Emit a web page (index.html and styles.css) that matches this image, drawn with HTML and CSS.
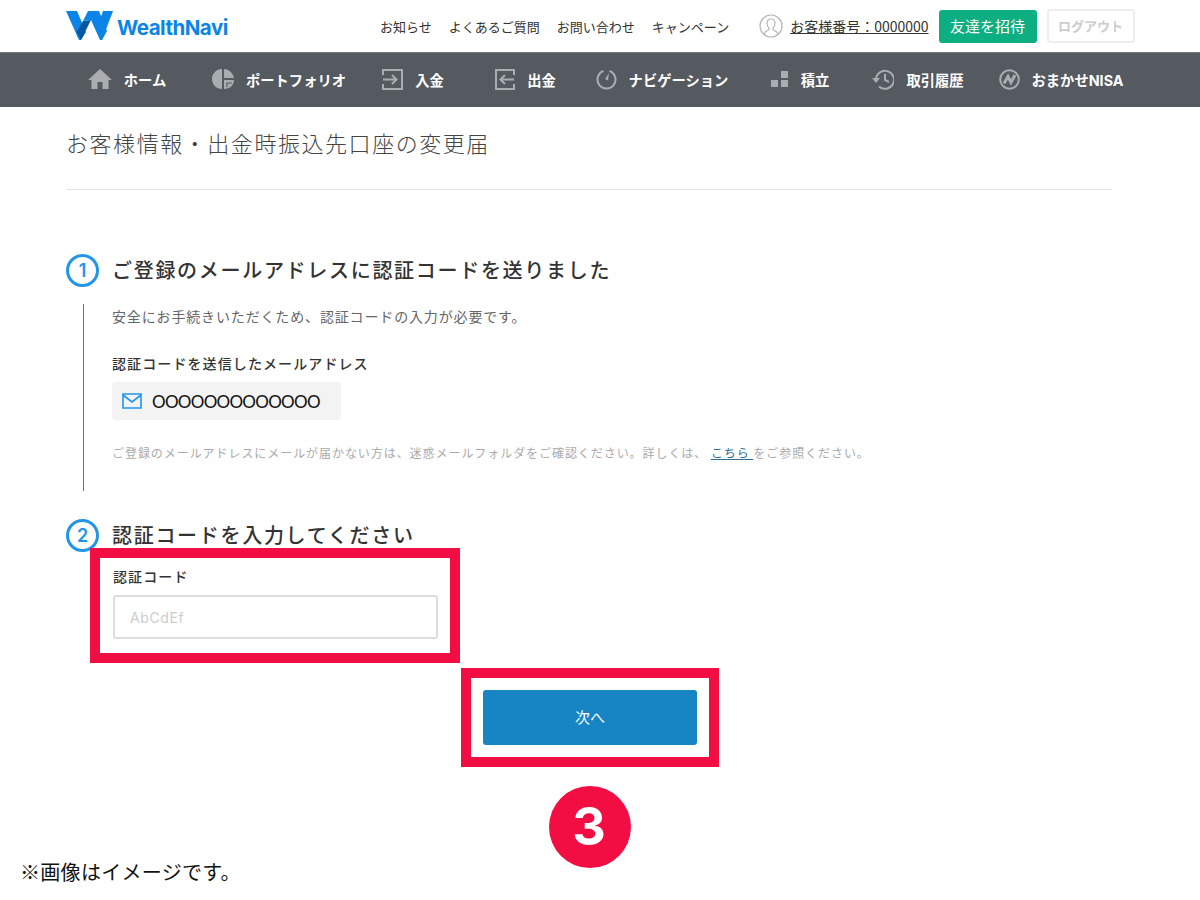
FILE: index.html
```html
<!DOCTYPE html>
<html lang="ja">
<head>
	<meta charset="UTF-8">
	<title>お客様情報・出金時振込先口座の変更届</title>
	<link rel="stylesheet" href="styles.css">
</head>
<body>
	<!-- header -->
	<div class="header">
		<a class="logo">
			<svg width="48" height="29" viewBox="0 0 48 29">
				<polygon points="0,0 11,0 20,21 15,29 13,29" fill="#0a84e6"/>
				<polygon points="17,10 10.500,21 15,29 25,9" fill="#05559f"/>
				<polygon points="17,10 22,0 33,0 41,20 36,29 34,29 25,9" fill="#0a84e6"/>
				<polygon points="31,17 37,0 47,0 36,29" fill="#0a84e6"/>
			</svg>
			<span class="logo-text">WealthNavi</span>
		</a>
		<div class="head-links">
			<a>お知らせ</a>
			<a>よくあるご質問</a>
			<a>お問い合わせ</a>
			<a>キャンペーン</a>
		</div>
		<svg class="user-icon" width="24" height="24" viewBox="0 0 24 24" fill="none" stroke="#b5b5b5" stroke-width="1.2">
			<circle cx="12" cy="12" r="11"/>
			<path d="M5 20c1-3 4-3 5-4.500v-1.500c-1.500-1-2-3-2-5 0-2.500 2-4 4-4s4 1.500 4 4c0 2-.5 4-2 5v1.500c1 1.500 4 1.500 5 4.500"/>
		</svg>
		<a class="user-no">お客様番号：0000000</a>
		<a class="btn-invite">友達を招待</a>
		<a class="btn-logout">ログアウト</a>
	</div>

	<!-- nav -->
	<div class="nav">
		<a class="nav-item">
			<svg width="24" height="22" viewBox="0 0 24 22"><path fill="#a9adb1" d="M12 1 24 12h-3.500v9h-6v-7h-5v7h-6v-9H0z"/></svg>
			ホーム
		</a>
		<a class="nav-item">
			<svg width="22" height="22" viewBox="0 0 22 22"><path fill="#a9adb1" d="M10 1v20C4 21 0 16 0 11S4 1 10 1zM12 1c5 0 9 4 10 9H12zM12 12h10c0 5-4 9-10 9z"/><path fill="none" stroke="#555a60" stroke-width="1.200" d="M15 19v-4h5"/></svg>
			ポートフォリオ
		</a>
		<a class="nav-item">
			<svg width="21" height="21" viewBox="0 0 21 21" fill="none" stroke="#a9adb1" stroke-width="2"><path d="M1 6V1h19v19H1v-5"/><path d="M1 10.500h13M10 6l4.500 4.500L10 15"/></svg>
			入金
		</a>
		<a class="nav-item">
			<svg width="20" height="21" viewBox="0 0 20 21" fill="none" stroke="#a9adb1" stroke-width="2"><path d="M19 6V1H1v19h18v-5"/><path d="M19 10.500H6M10 6l-4.500 4.500L10 15"/></svg>
			出金
		</a>
		<a class="nav-item">
			<svg width="21" height="21" viewBox="0 0 21 21" fill="none" stroke="#a9adb1" stroke-width="2"><path d="M13.500 2a9 9 0 1 1-6 0"/><path fill="#a9adb1" stroke="none" d="M13 4l-1 7.500-3-1.500z"/></svg>
			ナビゲーション
		</a>
		<a class="nav-item">
			<svg width="18" height="16" viewBox="0 0 18 16" fill="#a9adb1"><rect x="0" y="9" width="7" height="7"/><rect x="10" y="9" width="7" height="7"/><rect x="10" y="0" width="7" height="7"/></svg>
			積立
		</a>
		<a class="nav-item">
			<svg width="22" height="21" viewBox="0 0 22 21" fill="none" stroke="#a9adb1" stroke-width="2"><path d="M4 10.500a9 9 0 1 1 3 7"/><path d="M13 5v6l4 2"/><path fill="#a9adb1" stroke="none" d="M0 9h8l-4 5z"/></svg>
			取引履歴
		</a>
		<a class="nav-item">
			<svg width="21" height="21" viewBox="0 0 21 21" fill="none" stroke="#a9adb1"><circle cx="10.500" cy="10.500" r="9.300" stroke-width="2"/><path stroke-width="3" d="M5 14.500 9 7.500l3 6 4-7.500"/></svg>
			おまかせNISA
		</a>
	</div>

	<div class="main">
		<h1 class="title">お客様情報・出金時振込先口座の変更届</h1>

		<div class="step">
			<span class="step-no">1</span>
			<h2 class="step-title">ご登録のメールアドレスに認証コードを送りました</h2>
		</div>
		<div class="step-body">
			<p class="lead">安全にお手続きいただくため、認証コードの入力が必要です。</p>
			<p class="label">認証コードを送信したメールアドレス</p>
			<div class="mail-box">
				<svg width="20" height="16" viewBox="0 0 20 16" fill="none" stroke="#1f96ee" stroke-width="1.600"><path d="M1 1h18v14H1z"/><path d="M1 2l9 7 9-7"/></svg>
				<span class="mail-text">OOOOOOOOOOOOO</span>
			</div>
			<p class="note">ご登録のメールアドレスにメールが届かない方は、迷惑メールフォルダをご確認ください。詳しくは、 <a class="note-link">こちら </a>をご参照ください。</p>
		</div>

		<div class="step step2">
			<span class="step-no">2</span>
			<h2 class="step-title">認証コードを入力してください</h2>
		</div>
		<div class="code-form">
			<p class="label">認証コード</p>
			<input class="code-input" type="text" placeholder="AbCdEf">
		</div>
		<div class="btn-row">
			<a class="btn-next">次へ</a>
		</div>
	</div>

	<!-- 赤枠 -->
	<div class="mark mark-code"></div>
	<div class="mark mark-next"></div>
	<div class="mark-no">3</div>
	<p class="caption">※画像はイメージです。</p>
</body>
</html>
```

FILE: styles.css
```css
*{margin:0;padding:0;box-sizing:border-box;}
body {
	width: 1200px;
	height: 900px;
	position: relative;
	overflow: hidden;
	background: #fff;
	color: #333;
	font-family: "Noto Sans CJK JP", "Noto Sans", sans-serif;
}
.header {
	height: 52px;
	display: flex;
	align-items: center;
	padding: 0 65px 0 66px;
}
.logo {
	display: flex;
	align-items: center;
	width: 314px;
	margin-top: -2px;
}
.logo-text {
	margin-left: 3px;
	margin-top: 4px;
	font-family: "Inter", "Liberation Sans", sans-serif;
	font-size: 20.500px;
	font-weight: 700;
	letter-spacing: -0.5px;
	color: #0a84e6;
}
.head-links {
	display: flex;
	gap: 17px;
	font-size: 13px;
	color: #333;
}
.user-icon {
	margin-left: 30px;
}
.user-no {
	margin-left: 7px;
	font-size: 14px;
	color: #333;
	text-decoration: underline;
}
.btn-invite {
	margin-left: 10px;
	width: 98px;
	height: 33px;
	line-height: 32px;
	text-align: center;
	font-size: 15px;
	color: #fff;
	background: #0cae82;
	border-radius: 3px;
}
.btn-logout {
	margin-left: 10px;
	width: 88px;
	height: 34px;
	line-height: 30px;
	text-align: center;
	font-size: 13px;
	font-weight: 700;
	color: #ccc;
	border: 2px solid #eee;
	border-radius: 3px;
}
.nav {
	height: 55px;
	padding-left: 66px;
	padding-bottom: 2px;
	display: grid;
	grid-template-columns: 122px 182px 86px 139px 134px 142px 94px 192px;
	background: #555a60;
	border-top: 1px solid #777;
}
.nav-item {
	display: flex;
	align-items: center;
	justify-content: center;
	gap: 12px;
	font-family: "Inter", "Noto Sans CJK JP", sans-serif;
	font-size: 14.300px;
	font-weight: 700;
	color: #fff;
}
.main {
	padding: 0 88px 0 66px;
}
.title {
	height: 83px;
	padding-top: 18px;
	border-bottom: 1px solid #e5e5e5;
	font-size: 22px;
	line-height: 34px;
	font-weight: 300;
	letter-spacing: 1.550px;
	color: #444;
}
.step {
	display: flex;
	align-items: center;
	gap: 13px;
	margin-top: 64px;
}
.step2 {
	margin-top: 28px;
}
.step-no {
	width: 33px;
	height: 33px;
	line-height: 27px;
	text-align: center;
	border: 3px solid #2196e8;
	border-radius: 50%;
	font-family: "Inter", sans-serif;
	font-size: 18px;
	font-weight: 600;
	color: #2196e8;
}
.step-title {
	padding-bottom: 3px;
	font-size: 20px;
	font-weight: 500;
	letter-spacing: 1.700px;
	color: #333;
}
.step-body {
	margin: 18px 0 0 17px;
	height: 187px;
	padding: 0 0 0 28px;
	border-left: 1px solid #2b84d2;
}
.lead {
	margin-top: -1px;
	font-size: 14px;
	line-height: 24px;
	letter-spacing: 0.850px;
	color: #666;
}
.label {
	font-size: 14px;
	line-height: 24px;
	font-weight: 500;
	letter-spacing: 1.100px;
	color: #333;
}
.step-body .label {
	margin-top: 23px;
}
.mail-box {
	display: flex;
	align-items: center;
	gap: 10px;
	width: 229px;
	height: 38px;
	margin-top: 7px;
	padding-left: 10px;
	background: #f3f3f3;
	border-radius: 4px;
}
.mail-text {
	font-family: "Lato", sans-serif;
	font-size: 17px;
	letter-spacing: -0.700px;
	color: #111;
}
.note {
	margin-top: 23px;
	font-size: 12px;
	line-height: 20px;
	letter-spacing: 0.940px;
	color: #aaa;
}
.note-link {
	color: #2a6f97;
	text-decoration: underline;
}
.code-form {
	margin: 12px 0 0 47px;
}
.code-input {
	display: block;
	width: 325px;
	height: 44px;
	margin-top: 7px;
	padding-left: 15px;
	border: 2px solid #ddd;
	border-radius: 3px;
	font-family: "Inter", sans-serif;
	font-size: 14px;
	letter-spacing: 0.6px;
	outline: none;
}
.code-input::placeholder {
	color: #ccc;
}
.btn-row {
	display: flex;
	justify-content: center;
	margin: 51px 0 0 0;
}
.btn-next {
	width: 214px;
	height: 55px;
	margin-left: 2px;
	line-height: 53px;
	text-align: center;
	font-size: 15px;
	color: #fff;
	background: #1785c4;
	border-radius: 3px;
}
/* 注釈は画面の上に重ねる */
.mark {
	position: absolute;
	border: 10px solid #f20d42;
}
.mark-code {
	left: 90px;
	top: 548px;
	width: 370px;
	height: 115px;
}
.mark-next {
	left: 461px;
	top: 668px;
	width: 258px;
	height: 99px;
}
.mark-no {
	position: absolute;
	left: 549px;
	top: 786px;
	width: 82px;
	height: 82px;
	padding-right: 2px;
	line-height: 82px;
	text-align: center;
	border-radius: 50%;
	background: #f20d42;
	color: #fff;
	font-family: "Inter", sans-serif;
	font-size: 52px;
	font-weight: 700;
}
.caption {
	position: absolute;
	left: 20px;
	top: 858px;
	font-size: 20px;
	line-height: 28px;
	letter-spacing: 0.3px;
	color: #111;
}
```
